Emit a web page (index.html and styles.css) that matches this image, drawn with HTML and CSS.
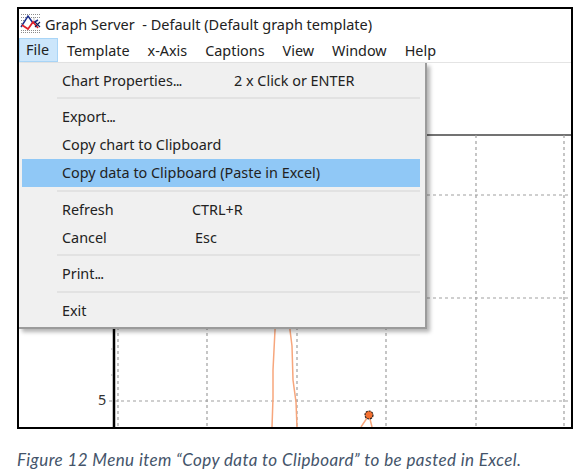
FILE: index.html
```html
<!DOCTYPE html>
<html>
<head>
    <meta charset="UTF-8">
    <meta name="viewport" content="width=device-width, initial-scale=1.0">
    <title>Graph Server</title>
    <link rel="stylesheet" href="styles.css">
</head>
<body>
    <div class="window">
        <div class="title-bar">
            <svg class="app-icon" width="21" height="21" viewBox="0 0 21 21">
                <path d="M1 1.500H20M1 4.500H20M1 7.500H7M1 10.500H5M1 17.500H20M1 19.500H20M14 4.500V8" fill="none" stroke="#8c8c8c" stroke-width="1" stroke-dasharray="1 1"/>
                <path d="M1 14L8 3L13 10L18 7" fill="none" stroke="#1c2f8c" stroke-width="1.500"/>
                <path d="M2 12L8 16L13 9L18 15" fill="none" stroke="#e0202a" stroke-width="1.700"/>
                <path d="M15 9L20 14M20 9L15 14" stroke="#10205c" stroke-width="1.100"/>
            </svg>
            <span class="title-text">Graph Server&nbsp; - Default (Default graph template)</span>
        </div>
        <div class="menu-bar">
            <span class="menu-head active">File</span>
            <span class="menu-head">Template</span>
            <span class="menu-head">x-Axis</span>
            <span class="menu-head">Captions</span>
            <span class="menu-head">View</span>
            <span class="menu-head">Window</span>
            <span class="menu-head">Help</span>
        </div>
        <div class="chart">
            <svg class="plot" width="552" height="364" viewBox="19 63 552 364">
                <path class="axis" d="M114 63V427"/>
                <path class="top-line" d="M114 135H571"/>
                <g class="grid-lines">
                    <path d="M118 135V427M207 135V427M297 135V427M386 135V427M476 135V427M564 135V427"/>
                    <path d="M109 195H571M109 298H571M109 401H571"/>
                </g>
                <path class="tick" d="M111 349H113M111 375H113"/>
                <text class="tick-label" x="98" y="405">5</text>
                <path class="series" d="M277 300L275 330L273 370L273 398L272 427M289 300L290 330L292 346L293 380L296 402L297 427M361 427L367 418L369 415L372 427"/>
                <circle class="marker" cx="369" cy="415" r="4"/>
            </svg>
            <div class="dropdown">
                <div class="item"><span class="label label-wide">Chart Properties<span class="dots">...</span></span><span>2 x Click or ENTER</span></div>
                <div class="sep"></div>
                <div class="item"><span class="label">Export<span class="dots">...</span></span></div>
                <div class="item"><span class="label">Copy chart to Clipboard</span></div>
                <div class="item selected"><span class="label">Copy data to Clipboard (Paste in Excel)</span></div>
                <div class="sep"></div>
                <div class="item"><span class="label label-refresh">Refresh</span><span>CTRL+R</span></div>
                <div class="item"><span class="label label-cancel">Cancel</span><span>Esc</span></div>
                <div class="sep"></div>
                <div class="item"><span class="label">Print<span class="dots">...</span></span></div>
                <div class="sep"></div>
                <div class="item"><span class="label">Exit</span></div>
            </div>
        </div>
    </div>
    <p class="caption">Figure 12 Menu item “Copy data to Clipboard” to be pasted in Excel.</p>
</body>
</html>
```

FILE: styles.css
```css
html, body {
    margin: 0;
    background: white;
}

body {
    padding: 7px 0 0 17px;
    font-family: "Noto Sans", "Open Sans", sans-serif;
    color: #222;
    overflow: hidden;
}

.window {
    width: 552px;
    height: 418px;
    border: 2px solid black;
    display: flex;
    flex-direction: column;
}

.title-bar {
    height: 29px;
    display: flex;
    align-items: center;
    gap: 3px;
    padding-left: 1px;
    font-size: 14.500px;
    flex: none;
}

.app-icon {
    flex: none;
}

.title-text {
    margin-left: 1px;
}

.menu-bar {
    height: 24px;
    display: flex;
    border-bottom: 1px solid #e4e4e4;
    font-size: 14.400px;
    flex: none;
}

.menu-head {
    padding: 0 8px;
    line-height: 24px;
    border: 1px solid transparent;
}

.menu-head.active {
    background: #cce6fb;
    border-color: #a9d5f7;
    padding: 0 8px 0 6px;
    width: 23px;
    line-height: 22px;
}

.chart {
    position: relative;
    flex: 1;
}

.plot {
    display: block;
}

.axis {
    stroke: black;
    stroke-width: 2.500;
}

.top-line {
    stroke: #444;
    stroke-width: 1.500;
}

.grid-lines path {
    fill: none;
    stroke: #a0a0a0;
    stroke-width: 1.200;
    stroke-dasharray: 3 3;
}

.tick {
    stroke: #aaa;
    stroke-width: 1;
}

.tick-label {
    font-size: 14.400px;
    fill: #333;
}

.series {
    fill: none;
    stroke: #f7a67c;
    stroke-width: 1.500;
}

.marker {
    fill: #f47030;
    stroke: #222;
    stroke-width: 1.200;
    stroke-dasharray: 2 1;
}

.dropdown {
    position: absolute;
    top: 0;
    left: 0;
    width: 408px;
    height: 266px;
    box-sizing: border-box;
    padding: 3px 5px 0 3px;
    background: #f0f0f0;
    border-right: 2px solid #9b9b9b;
    border-bottom: 2px solid #9b9b9b;
    box-shadow: 3px 3px 4px rgba(0, 0, 0, 0.3);
    font-size: 14.400px;
}

.item {
    height: 28px;
    display: flex;
    align-items: center;
    padding-left: 40px;
    white-space: nowrap;
}

.item.selected {
    background: #90c8f6;
}

.label {
    display: block;
}

.label-wide {
    width: 172px;
}

.label-refresh {
    width: 130px;
}

.label-cancel {
    width: 133px;
}

.dots {
    letter-spacing: -1px;
}

.sep {
    height: 2px;
    margin: 3.250px 0 3.250px 35px;
    background: #e2e2e2;
}

.caption {
    margin: 20px 0 0;
    font-family: Lato, "Noto Sans", sans-serif;
    font-size: 17px;
    letter-spacing: 0.400px;
    font-style: italic;
    color: #44546a;
}
```
